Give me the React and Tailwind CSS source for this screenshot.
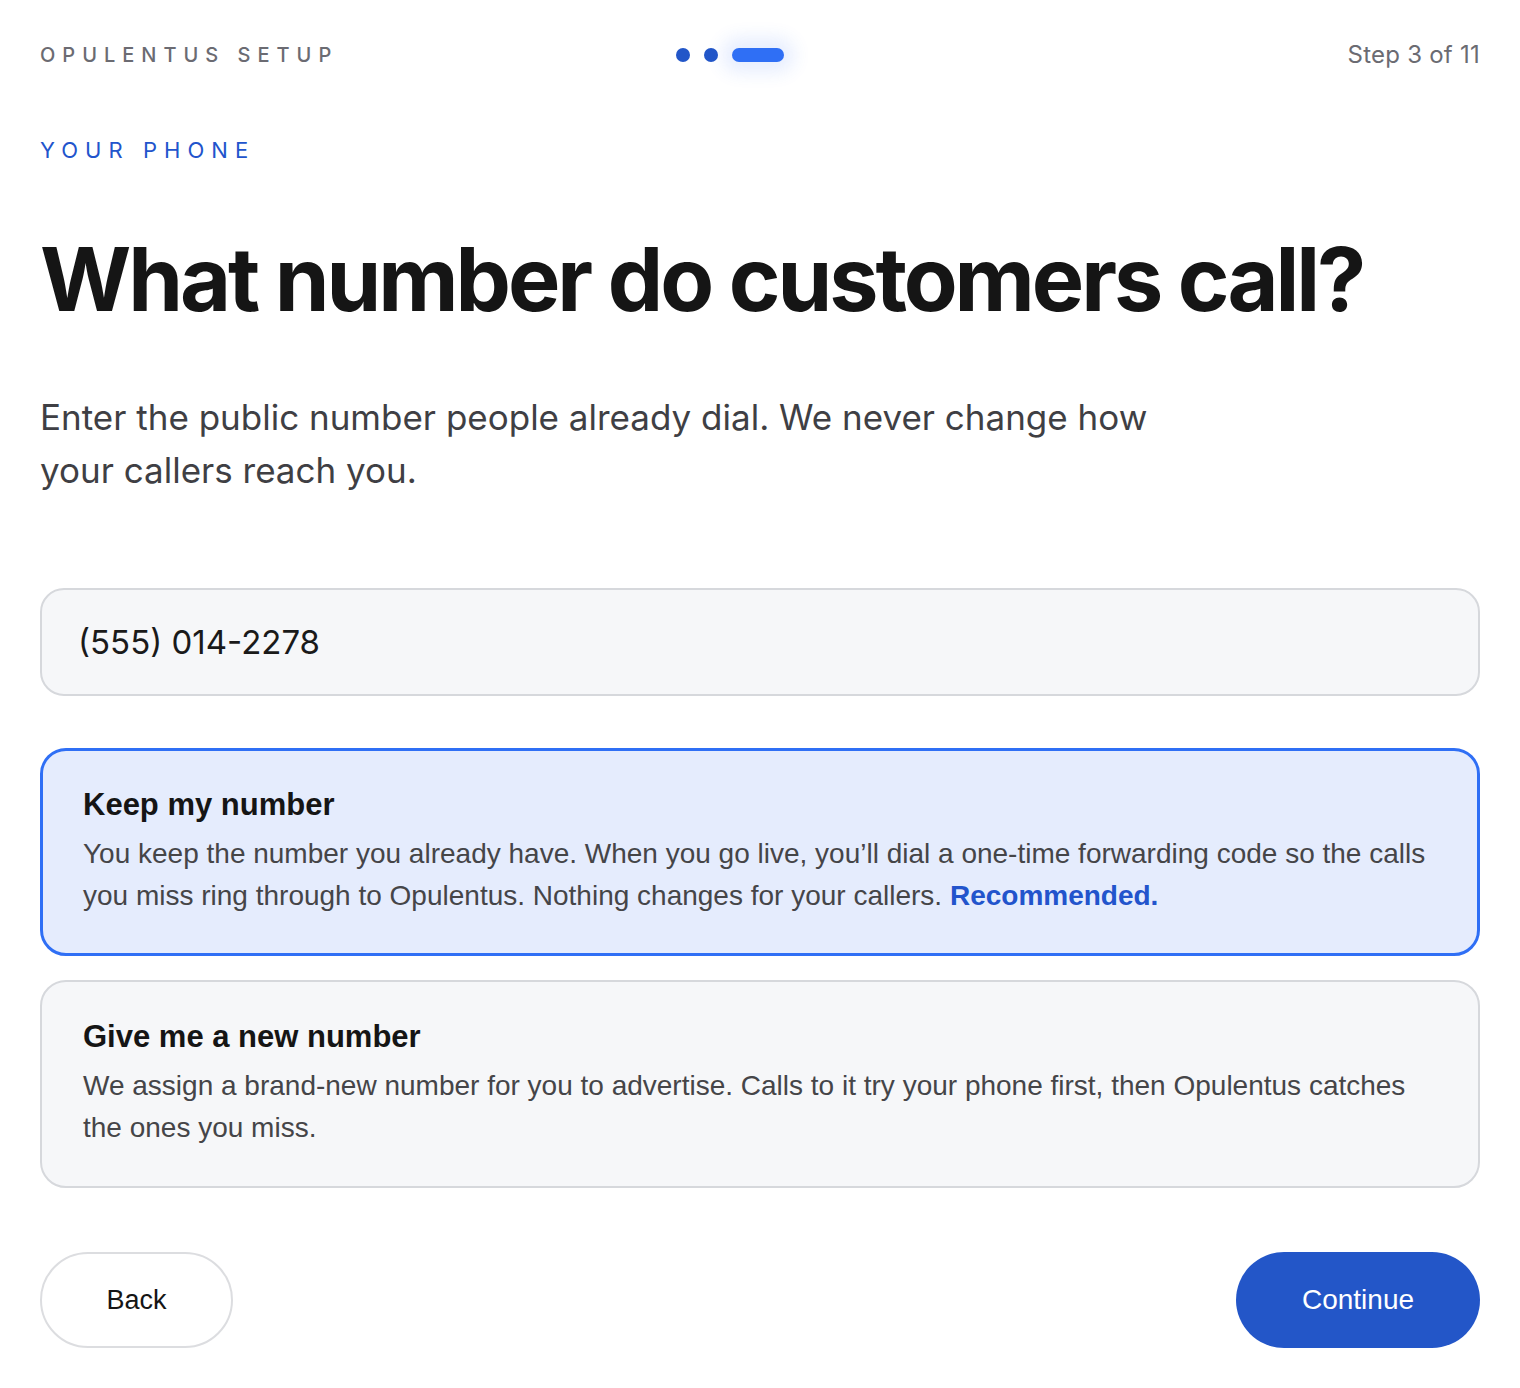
import React, { useState } from 'react';

const inter = { fontFamily: 'Inter, "Noto Sans", sans-serif' };

function Option({ title, children, selected, onClick }) {
	return (
		<button
			type="button"
			onClick={onClick}
			className={`${selected ? "border-[3px] border-[#2f6ff5] bg-[#e5ecfd] px-[40px]" : "border-2 border-[#d6d8dc] bg-[#f6f7f9] px-[41px]"} w-full h-[208px] rounded-[26px] text-left flex flex-col justify-center font-['Liberation_Sans',Arial,sans-serif]`}
		>
			<div className="text-[31px] font-bold text-[#151515] leading-[36px]">{title}</div>
			<p className="mt-[10px] text-[28px] leading-[42px] text-[#454548]">{children}</p>
		</button>
	);
}

export default function App() {
	const [choice, setChoice] = useState(1);
	const [phone, setPhone] = useState('(555) 014-2278');

	return (
		<div className="min-h-screen bg-white px-[40px] pt-[40px]" style={inter}>
			{/* top bar */}
			<div className="flex items-center justify-between h-[30px]">
				<div className="w-[400px] text-[20px] font-medium tracking-[0.35em] text-[#6b6b72]">OPULENTUS SETUP</div>
				<div className="flex items-center gap-[14px] relative left-[-30px]">
					<span className="w-[14px] h-[14px] rounded-full bg-[#2256c8]"></span>
					<span className="w-[14px] h-[14px] rounded-full bg-[#2256c8]"></span>
					<span className="w-[52px] h-[14px] rounded-full bg-[#2f6ff5] shadow-[0_0_18px_10px_rgba(47,111,245,0.12)]"></span>
				</div>
				<div className="w-[400px] text-right text-[24px] tracking-[0.01em] text-[#6b6b72]">Step 3 of 11</div>
			</div>

			<div className="mt-[64px] text-[22px] tracking-[0.32em] text-[#2254cc]">YOUR PHONE</div>

			<h1 className="mt-[62px] text-[88px] font-bold leading-[100px] tracking-[-0.035em] text-[#151515]">What number do customers call?</h1>

			<p className="mt-[62px] w-[1160px] text-[35px] leading-[53px] text-[#3f3f44]">
				Enter the public number people already dial. We never change how your callers reach you.
			</p>

			<input
				value={phone}
				onChange={(e) => setPhone(e.target.value)}
				className="mt-[91px] block w-full h-[108px] rounded-[24px] border-2 border-[#d6d8dc] bg-[#f6f7f9] px-[36px] text-[33px] text-[#1a1a1a] outline-none"
			/>

			<div className="mt-[52px] flex flex-col gap-[24px]">
				<Option title="Keep my number" selected={choice === 1} onClick={() => setChoice(1)}>
					You keep the number you already have. When you go live, you’ll dial a one-time forwarding code so the calls you miss ring through to Opulentus. Nothing changes for your callers. <span className="font-bold text-[#2254cc]">Recommended.</span>
				</Option>
				<Option title="Give me a new number" selected={choice === 2} onClick={() => setChoice(2)}>
					We assign a brand-new number for you to advertise. Calls to it try your phone first, then Opulentus catches the ones you miss.
				</Option>
			</div>

			<div className="mt-[64px] flex items-center justify-between font-['Liberation_Sans',Arial,sans-serif]">
				<button type="button" className="w-[193px] h-[96px] rounded-full border-2 border-[#dcdde0] bg-white text-[27px] text-[#151515]">Back</button>
				<button type="button" className="w-[244px] h-[96px] rounded-full bg-[#2356c8] text-[28px] text-white">Continue</button>
			</div>
		</div>
	);
}
